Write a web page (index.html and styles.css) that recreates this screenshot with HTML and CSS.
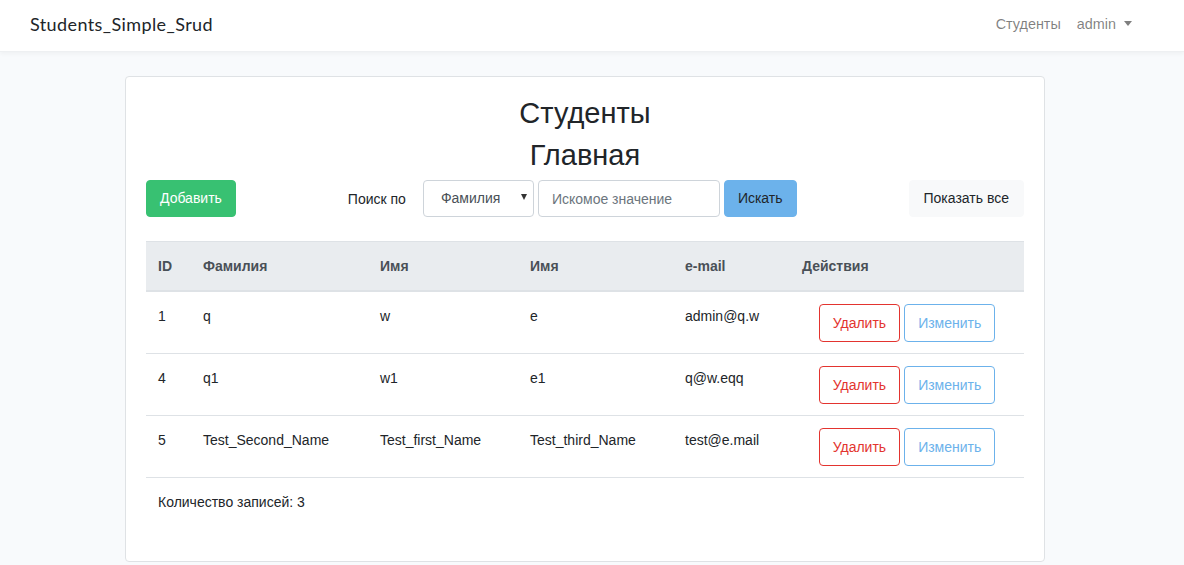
FILE: index.html
```html
<!DOCTYPE html>
<html lang="ru">
<head>
<meta charset="utf-8">
<title>Students_Simple_Srud</title>
<link rel="stylesheet" href="styles.css">
</head>
<body>
<nav class="navbar">
  <a class="brand" href="#">Students_Simple_Srud</a>
  <ul class="nav-links">
    <li><a href="#">Студенты</a></li>
    <li><a href="#" class="dropdown-toggle">admin</a></li>
  </ul>
</nav>
<main class="page">
  <section class="card">
    <h2 class="title">Студенты</h2>
    <h2 class="title">Главная</h2>
    <div class="toolbar">
      <button class="btn btn-success">Добавить</button>
      <form class="search">
        <span class="search-label">Поиск по</span>
        <div class="select">Фамилия<span class="select-caret"></span></div>
        <input class="input" type="text" placeholder="Искомое значение">
        <button class="btn btn-info" type="button">Искать</button>
      </form>
      <button class="btn btn-light">Показать все</button>
    </div>
    <table class="table">
      <thead>
        <tr>
          <th class="c-id">ID</th>
          <th class="c-last">Фамилия</th>
          <th class="c-first">Имя</th>
          <th class="c-third">Имя</th>
          <th class="c-mail">e-mail</th>
          <th class="c-act">Действия</th>
        </tr>
      </thead>
      <tbody>
        <tr>
          <td>1</td><td>q</td><td>w</td><td>e</td><td>admin@q.w</td>
          <td class="actions"><button class="btn btn-outline-danger">Удалить</button><button class="btn btn-outline-info">Изменить</button></td>
        </tr>
        <tr>
          <td>4</td><td>q1</td><td>w1</td><td>e1</td><td>q@w.eqq</td>
          <td class="actions"><button class="btn btn-outline-danger">Удалить</button><button class="btn btn-outline-info">Изменить</button></td>
        </tr>
        <tr>
          <td>5</td><td>Test_Second_Name</td><td>Test_first_Name</td><td>Test_third_Name</td><td>test@e.mail</td>
          <td class="actions"><button class="btn btn-outline-danger">Удалить</button><button class="btn btn-outline-info">Изменить</button></td>
        </tr>
      </tbody>
    </table>
    <p class="count">Количество записей: 3</p>
  </section>
</main>
</body>
</html>
```

FILE: styles.css
```css
* { box-sizing: border-box; }
html, body { margin: 0; padding: 0; }
body {
  background: #f8fafc;
  font-family: "Liberation Sans", Arial, sans-serif;
  font-size: 14px;
  line-height: 24px;
  color: #212529;
}
a { text-decoration: none; }

.navbar {
  height: 52px;
  background: #fff;
  box-shadow: 0 2px 4px rgba(0, 0, 0, 0.04);
  border-bottom: 1px solid #eef0f2;
  display: flex;
  align-items: center;
  justify-content: space-between;
  padding: 0 52px 0 30px;
}
.brand {
  font-family: "Lato", "Noto Sans", sans-serif;
  font-size: 18px;
  color: #212529;
  letter-spacing: 0.4px;
  margin-top: -4px;
}
.nav-links {
  list-style: none;
  margin: -4px 0 0;
  padding: 0;
  display: flex;
  gap: 16px;
}
.nav-links a { color: rgba(0, 0, 0, 0.5); font-size: 14.4px; }
.dropdown-toggle::after {
  content: "";
  display: inline-block;
  margin-left: 8px;
  vertical-align: 3px;
  border-top: 5px solid rgba(0, 0, 0, 0.5);
  border-left: 4.5px solid transparent;
  border-right: 4.5px solid transparent;
}

.page { padding: 24px 0 0 125px; }
.card {
  width: 920px;
  height: 486px;
  background: #fff;
  border: 1px solid #dfe2e5;
  border-radius: 4px;
  padding: 20px;
}
.title {
  margin: 0 0 8px;
  text-align: center;
  font-weight: 400;
  font-size: 29px;
  line-height: 33.6px;
}

.toolbar {
  display: flex;
  justify-content: space-between;
  align-items: center;
  margin: 2px 0 24px;
}
.btn {
  font-family: inherit;
  font-size: 14px;
  height: 37px;
  padding: 0 13px;
  border-radius: 4px;
  border: 1px solid transparent;
  background: none;
  line-height: 35px;
  cursor: pointer;
}
.btn-success { background: #38c172; border-color: #38c172; color: #fff; }
.btn-info { background: #6cb2eb; border-color: #6cb2eb; color: #212529; }
.btn-light { background: #f8f9fa; border-color: #f8f9fa; color: #212529; padding: 0 14px; }
.btn-outline-danger { border-color: #e3342f; color: #e3342f; background: #fff; }
.btn-outline-info { border-color: #6cb2eb; color: #6cb2eb; background: #fff; }

.search { display: flex; align-items: center; gap: 4px; margin: 0; }
.search-label { margin-right: 13px; }
.select {
  position: relative;
  width: 111px;
  height: 37px;
  border: 1px solid #ced4da;
  border-radius: 4px;
  color: #495057;
  font-size: 14px;
  line-height: 35px;
  padding-left: 17px;
}
.select-caret {
  position: absolute;
  right: 6px;
  top: 13px;
  border-top: 6px solid #333;
  border-left: 3.5px solid transparent;
  border-right: 3.5px solid transparent;
}
.input {
  width: 182px;
  height: 37px;
  border: 1px solid #ced4da;
  border-radius: 4px;
  padding: 0 13px;
  font-family: inherit;
  font-size: 14px;
  color: #495057;
}
.input::placeholder { color: #6c757d; }

.table {
  width: 878px;
  border-collapse: collapse;
}
.table th, .table td {
  padding: 12px;
  text-align: left;
  vertical-align: top;
  border-top: 1px solid #dee2e6;
}
.table thead th {
  background: #e9ecef;
  color: #495057;
  font-weight: 700;
  border-bottom: 2px solid #dee2e6;
}
.c-id { width: 45px; }
.c-last { width: 177px; }
.c-first { width: 150px; }
.c-third { width: 155px; }
.c-mail { width: 117px; }
.table td.actions {
  text-align: center;
  padding-top: 12px;
  padding-bottom: 11px;
}
.table td.actions .btn { height: 38px; line-height: 36px; }
.table td.actions .btn + .btn { margin-left: 4px; }
.table tbody tr:last-child td { border-bottom: 1px solid #dee2e6; }

.count { margin: 0; padding: 12px; }
```
